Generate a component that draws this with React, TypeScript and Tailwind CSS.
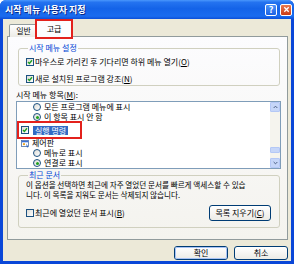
import React from 'react';

const font = "font-['Noto_Sans_CJK_KR','Noto_Sans',sans-serif]";

const CheckBox = ({ checked }: { checked?: boolean }) => (
    <span className="inline-flex w-[8px] h-[8px] shrink-0 items-center justify-center border border-[#1C5180] bg-gradient-to-br from-[#DCDCD7] to-white">
        {checked && (
            <svg viewBox="0 0 6 6" className="w-[6px] h-[6px]">
                <path d="M1 3 L2.4 4.5 L5 1.3" stroke="#21A121" strokeWidth="1.4" fill="none" />
            </svg>
        )}
    </span>
);

const Radio = ({ selected }: { selected?: boolean }) => (
    <span className="inline-flex w-[8px] h-[8px] shrink-0 items-center justify-center rounded-full border border-[#1C5180] bg-gradient-to-br from-[#DCDCD7] to-white">
        {selected && <span className="w-[3px] h-[3px] rounded-full bg-[#21A121]" />}
    </span>
);

const XpButton = ({ children, def, className = '' }: { children: React.ReactNode; def?: boolean; className?: string }) => (
    <div className={`flex items-center justify-center rounded-[3px] border border-[#003C74] bg-gradient-to-b from-white to-[#ECEBE6] text-[8px] text-black ${className}`}>
        <div className={`flex h-full w-full items-center justify-center rounded-[2px] ${def ? 'shadow-[inset_0_0_0_1px_#A8C3F5]' : ''}`}>{children}</div>
    </div>
);

const ControlPanelIcon = () => (
    <svg viewBox="0 0 9 9" className="w-[9px] h-[9px] shrink-0">
        <rect x="0.5" y="1.5" width="7" height="6" fill="#fff" stroke="#4A6EA8" strokeWidth="0.8" />
        <rect x="0.9" y="1.9" width="6.2" height="1.4" fill="#3A6FD4" />
        <circle cx="3" cy="5.2" r="1.1" fill="#E8A020" />
        <path d="M5 4.5 L7.5 8 L6 8.5 Z" fill="#2C62C0" />
    </svg>
);

const ScrollArrow = ({ up }: { up?: boolean }) => (
    <div className="flex h-[10px] w-[10px] items-center justify-center rounded-[1px] border border-[#B4C8F6] bg-[#C6D6F8]">
        <svg viewBox="0 0 6 4" className="w-[5px] h-[4px]">
            <path d={up ? 'M0.8 3.2 L3 1 L5.2 3.2' : 'M0.8 0.8 L3 3 L5.2 0.8'} stroke="#4D6185" strokeWidth="1.2" fill="none" />
        </svg>
    </div>
);

export default function App() {
    return (
        <div className={`w-[297px] h-[265px] bg-white ${font}`}>
            <div className="flex h-[264px] w-[294px] flex-col overflow-hidden rounded-t-[6px] bg-[#0A47D8]">
                {/* title bar */}
                <div className="flex h-[19px] shrink-0 items-center justify-between bg-[linear-gradient(to_bottom,#4A97FC_0%,#2473F0_12%,#1463E8_45%,#1A6CEF_85%,#0C4FD8_100%)] pl-[5px] pr-[2px]">
                    <span className="text-[9px] font-bold leading-none text-white [text-shadow:1px_1px_0_#0A2A8A]">시작 메뉴 사용자 지정</span>
                    <div className="flex items-center gap-[3px]">
                        <div className="flex h-[12px] w-[12px] items-center justify-center rounded-[2px] border border-white bg-gradient-to-b from-[#4E94F8] to-[#1C62E4] text-[9px] font-bold leading-none text-white">?</div>
                        <div className="flex h-[12px] w-[12px] items-center justify-center rounded-[2px] border border-white bg-gradient-to-b from-[#E8784E] to-[#CC3A12]">
                            <svg viewBox="0 0 8 8" className="w-[7px] h-[7px]">
                                <path d="M1.5 1.5 L6.5 6.5 M6.5 1.5 L1.5 6.5" stroke="#fff" strokeWidth="1.5" />
                            </svg>
                        </div>
                    </div>
                </div>

                {/* body */}
                <div className="mx-[3px] mb-[3px] flex flex-1 flex-col bg-[#ECE9D8] pt-[1px]">
                    {/* tabs */}
                    <div className="relative z-10 flex h-[17px] items-end pl-[6px]">
                        <div className="flex h-[13px] w-[29px] items-center justify-center rounded-t-[2px] border border-b-0 border-[#919B9C] bg-gradient-to-b from-white to-[#ECEBE6] text-[8px] leading-none">일반</div>
                        <div className="-ml-[1px] flex h-[16px] w-[34px] items-center justify-center bg-[#FCFCFE] text-[8px] leading-none outline-2 outline-[#E3211C]">고급</div>
                    </div>

                    {/* panel */}
                    <div className="-mt-[1px] ml-[4px] mr-[3px] flex h-[204px] flex-col border border-[#919B9C] bg-gradient-to-b from-[#FCFCFE] to-[#F4F3EE] text-[8px] text-black">
                        <fieldset className="ml-[10px] mr-[7px] mt-[6px] rounded-[3px] border border-[#D0D0BF] pl-[7px] pb-[1px]">
                            <legend className="ml-[2px] px-[1px] text-[8px] leading-[10px] text-[#0046D5]">시작 메뉴 설정</legend>
                            <div className="flex flex-col gap-[6px] pt-[3px]">
                                <div className="flex h-[11px] items-center gap-[1px] whitespace-nowrap">
                                    <CheckBox checked />
                                    <span>마우스로 가리킨 후 기다리면 하위 메뉴 열기(<u>O</u>)</span>
                                </div>
                                <div className="flex h-[11px] items-center gap-[1px] whitespace-nowrap">
                                    <CheckBox checked />
                                    <span>새로 설치된 프로그램 강조(<u>N</u>)</span>
                                </div>
                            </div>
                        </fieldset>

                        <div className="ml-[8px] mt-[4px] h-[10px] leading-[10px]">시작 메뉴 항목(<u>M</u>):</div>

                        <div className="ml-[8px] mr-[6px] mt-[1px] flex h-[68px] border border-[#7F9DB9] bg-white">
                            <div className="flex flex-1 flex-col whitespace-nowrap">
                                <div className="flex h-[10px] items-center gap-[3px] pl-[16px]">
                                    <Radio />
                                    <span>모든 프로그램 메뉴에 표시</span>
                                </div>
                                <div className="flex h-[10px] items-center gap-[3px] pl-[16px]">
                                    <Radio selected />
                                    <span>이 항목 표시 안 함</span>
                                </div>
                                <div className="flex h-[16px] items-center pl-[2px]">
                                    <div className="flex h-[14px] items-center gap-[4px] pl-[2px] pr-[12px] outline-2 outline-[#E3211C]">
                                        <CheckBox checked />
                                        <span className="bg-[#316AC5] px-[2px] leading-[9px] text-white">실행 명령</span>
                                    </div>
                                </div>
                                <div className="flex h-[10px] items-center gap-[2px] pl-[4px]">
                                    <ControlPanelIcon />
                                    <span>제어판</span>
                                </div>
                                <div className="flex h-[10px] items-center gap-[3px] pl-[16px]">
                                    <Radio />
                                    <span>메뉴로 표시</span>
                                </div>
                                <div className="flex h-[10px] items-center gap-[3px] pl-[16px]">
                                    <Radio selected />
                                    <span>연결로 표시</span>
                                </div>
                            </div>
                            {/* scrollbar */}
                            <div className="flex w-[10px] flex-col bg-[#F5F4EE]">
                                <ScrollArrow up />
                                <div className="flex flex-1 flex-col justify-end pb-[5px]">
                                    <div className="h-[6px] rounded-[1px] border border-[#B4C8F6] bg-[#C6D6F8]" />
                                </div>
                                <ScrollArrow />
                            </div>
                        </div>

                        <fieldset className="ml-[10px] mr-[7px] mt-[1px] rounded-[3px] border border-[#D0D0BF] pl-[7px] pr-[8px] pb-[6px]">
                            <legend className="ml-[2px] px-[1px] text-[8px] leading-[10px] text-[#0046D5]">최근 문서</legend>
                            <p className="whitespace-nowrap text-[7.6px] leading-[10px]">
                                이 옵션을 선택하면 최근에 자주 열었던 문서를 빠르게 액세스할 수 있습
                                <br />
                                니다. 이 목록을 지워도 문서는 삭제되지 않습니다.
                            </p>
                            <div className="mt-[5px] flex h-[16px] items-center justify-between">
                                <div className="flex items-center gap-[1px] whitespace-nowrap">
                                    <CheckBox />
                                    <span>최근에 열었던 문서 표시(<u>B</u>)</span>
                                </div>
                                <XpButton className="h-[16px] w-[62px]">목록 지우기(<u>C</u>)</XpButton>
                            </div>
                        </fieldset>
                    </div>

                    {/* dialog buttons */}
                    <div className="mr-[3px] mt-[6px] flex justify-end gap-[6px]">
                        <XpButton def className="h-[14px] w-[54px]">확인</XpButton>
                        <XpButton className="h-[14px] w-[54px]">취소</XpButton>
                    </div>
                </div>
            </div>
        </div>
    );
}
